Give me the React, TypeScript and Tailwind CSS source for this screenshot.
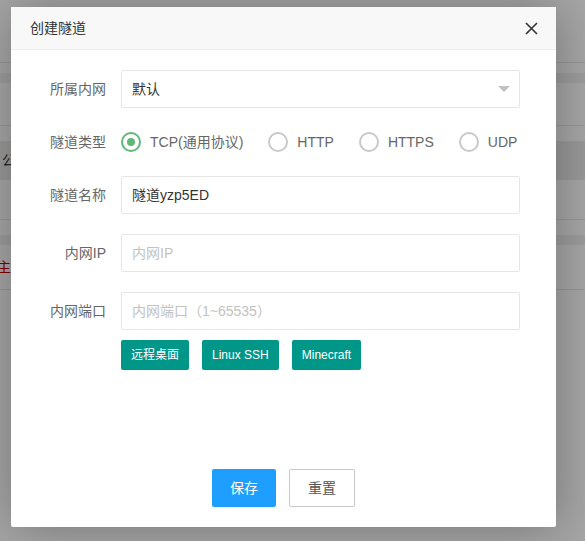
const font = { fontFamily: '"Liberation Sans", "Noto Sans CJK SC", sans-serif' };

function Radio({ label, checked }: { label: string; checked?: boolean }) {
  return (
    <label className="flex items-center">
      <span
        className={
          checked
            ? "flex h-[20px] w-[20px] items-center justify-center rounded-full border-2 border-[#5FB878]"
            : "flex h-[20px] w-[20px] items-center justify-center rounded-full border-2 border-[#c9c9c9]"
        }
      >
        {checked && <span className="h-[8px] w-[8px] rounded-full bg-[#5FB878]" />}
      </span>
      <span className="ml-[9px] text-[14px] text-[#666]">{label}</span>
    </label>
  );
}

function Field({ label, children }: { label: string; children: React.ReactNode }) {
  return (
    <div className="mb-[20px] flex">
      <div className="w-[110px] pr-[15px] text-right text-[14px] leading-[38px] text-[#666]">{label}</div>
      {children}
    </div>
  );
}

function BackgroundPage() {
  return (
    <div className="h-[541px] bg-white">
      <div className="h-[62px]" />
      <div className="h-px bg-[#e6e6e6]" />
      <div className="h-[10px]" />
      <div className="h-[10px] bg-[#f2f2f2]" />
      <div className="h-[42px]" />
      <div className="h-px bg-[#e6e6e6]" />
      <div className="h-[15px]" />
      <div className="flex h-[39px] items-center bg-[#ececec] pl-[2px] text-[14px] text-[#333]">公告</div>
      <div className="h-[39px]" />
      <div className="h-px bg-[#e6e6e6]" />
      <div className="h-[15px]" />
      <div className="h-[10px] bg-[#f2f2f2]" />
      <div className="flex h-[44px] items-center text-[14px] text-[#c00]">
        <span className="-ml-[3px]">主面</span>
      </div>
      <div className="h-px bg-[#e6e6e6]" />
    </div>
  );
}

export default function App() {
  return (
    <div className="relative h-[541px] w-[585px] overflow-hidden" style={font}>
      <BackgroundPage />
      <div className="absolute inset-0 bg-black/[0.35]" />

      <div className="absolute left-[11px] top-[7px] flex h-[520px] w-[545px] flex-col rounded-[2px] bg-white shadow-[1px_1px_50px_rgba(0,0,0,0.3)]">
        <div className="flex h-[43px] items-center justify-between border-b border-[#eee] bg-[#F8F8F8] pl-[19px] pr-[18px] text-[14px] text-[#333]">
          <span>创建隧道</span>
          <svg width="13" height="13" viewBox="0 0 13 13" fill="none" stroke="#333" strokeWidth="1.6">
            <path d="M1 1L12 12M12 1L1 12" />
          </svg>
        </div>

        <div className="flex-1 pt-[20px]">
          <Field label="所属内网">
            <div className="flex h-[38px] w-[399px] items-center justify-between rounded-[2px] border border-[#e6e6e6] pl-[10px] pr-[9px] text-[14px] text-[#333]">
              <span>默认</span>
              <span className="h-0 w-0 border-x-[6px] border-t-[6px] border-x-transparent border-t-[#c2c2c2]" />
            </div>
          </Field>

          <div className="mb-[20px] flex h-[28px] items-center">
            <div className="w-[110px] pr-[15px] text-right text-[14px] text-[#666]">隧道类型</div>
            <div className="flex items-center gap-[25px]">
              <Radio label="TCP(通用协议)" checked />
              <Radio label="HTTP" />
              <Radio label="HTTPS" />
              <Radio label="UDP" />
            </div>
          </div>

          <Field label="隧道名称">
            <div className="flex h-[38px] w-[399px] items-center rounded-[2px] border border-[#e6e6e6] pl-[10px] text-[14px] text-[#333]">
              隧道yzp5ED
            </div>
          </Field>

          <Field label="内网IP">
            <div className="flex h-[38px] w-[399px] items-center rounded-[2px] border border-[#e6e6e6] pl-[10px] text-[14px] text-[#c2c2c2]">
              内网IP
            </div>
          </Field>

          <div className="flex">
            <div className="w-[110px] pr-[15px] text-right text-[14px] leading-[38px] text-[#666]">内网端口</div>
            <div className="flex h-[38px] w-[399px] items-center rounded-[2px] border border-[#e6e6e6] pl-[10px] text-[14px] text-[#c2c2c2]">
              内网端口（1~65535）
            </div>
          </div>

          <div className="ml-[110px] mt-[10px] flex gap-[13px]">
            <button className="h-[30px] rounded-[2px] bg-[#009688] px-[10px] text-[12px] text-white">远程桌面</button>
            <button className="h-[30px] rounded-[2px] bg-[#009688] px-[10px] text-[12px] text-white">Linux SSH</button>
            <button className="h-[30px] rounded-[2px] bg-[#009688] px-[10px] text-[12px] text-white">Minecraft</button>
          </div>
        </div>

        <div className="flex justify-center gap-[13px] pb-[20px]">
          <button className="h-[38px] rounded-[2px] bg-[#1E9FFF] px-[18px] text-[14px] text-white">保存</button>
          <button className="h-[38px] rounded-[2px] border border-[#c9c9c9] bg-white px-[18px] text-[14px] text-[#555]">重置</button>
        </div>
      </div>
    </div>
  );
}
